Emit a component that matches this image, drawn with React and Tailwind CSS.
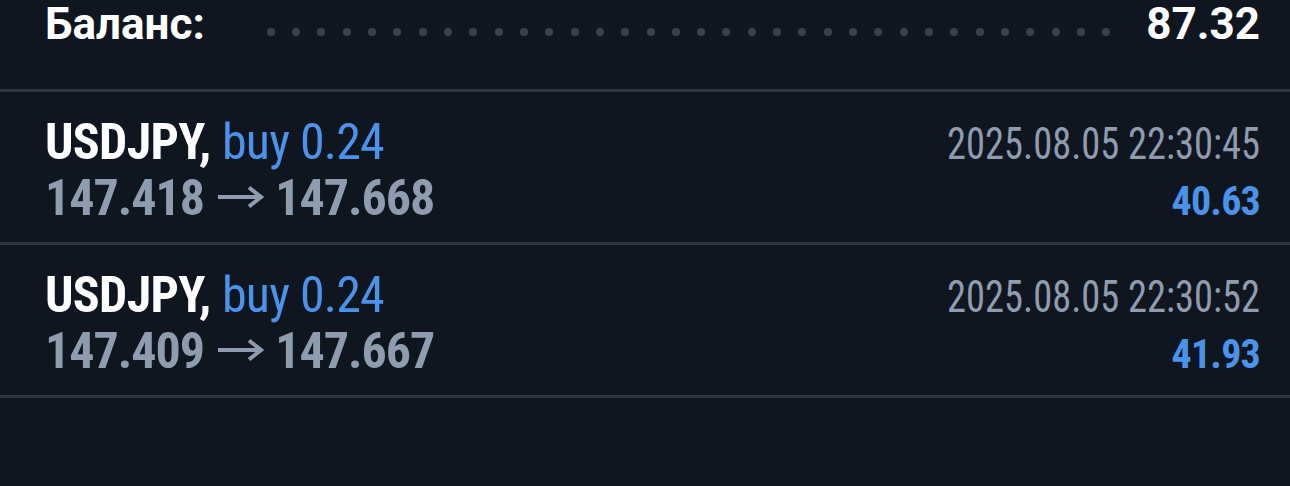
import React from "react";

const trades = [
  { symbol: "USDJPY,", side: "buy 0.24", open: "147.418", close: "147.668", time: "2025.08.05 22:30:45", profit: "40.63" },
  { symbol: "USDJPY,", side: "buy 0.24", open: "147.409", close: "147.667", time: "2025.08.05 22:30:52", profit: "41.93" },
];

const font = { fontFamily: "Roboto, 'Noto Sans', sans-serif" };

function Arrow() {
  return (
    <svg width="46" height="26" viewBox="0 0 46 26" className="inline-block align-[5px] ml-[14px] mr-[11px]" fill="none" stroke="#8f9cb0" strokeWidth="4" strokeLinecap="butt" strokeLinejoin="miter">
      <path d="M0 13H42" />
      <path d="M31 3.5L43 13L31 22.5" />
    </svg>
  );
}

export default function App() {
  const dots = Array.from({ length: 34 });
  return (
    <div className="w-[1290px] h-[486px] bg-[#10161f] overflow-hidden" style={font}>
      {/* balance */}
      <div className="h-[92px] border-b-[3px] border-[#2f3643] flex items-start pl-[45px] pr-[30px]">
        <span className="text-[44px] leading-[48px] font-bold text-white">Баланс:</span>
        <div className="flex-1 flex justify-between mt-[28px] ml-[62px] mr-[36px]">
          {dots.map((_, i) => (
            <span key={i} className="w-[8px] h-[8px] rounded-full bg-[#394150]" />
          ))}
        </div>
        <span className="text-[44px] leading-[48px] font-bold text-white">87.32</span>
      </div>

      {/* closed positions */}
      {trades.map((t, i) => (
        <div key={i} className="h-[153px] border-b-[3px] border-[#2f3643] pt-[23px] pl-[45px] pr-[30px] [font-stretch:75%]">
          <div className="flex justify-between items-baseline leading-[54px]">
            <span className="text-[50px] whitespace-nowrap">
              <span className="text-white font-bold tracking-[-0.7px]">{t.symbol}</span>{" "}
              <span className="text-[#4b93ea] font-normal tracking-[-0.8px]">{t.side}</span>
            </span>
            <span className="inline-block origin-right scale-x-[0.874] text-[44px] text-[#8f9cb0] whitespace-nowrap">{t.time}</span>
          </div>
          <div className="flex justify-between items-baseline leading-[54px]">
            <span className="text-[50px] font-bold text-[#8f9cb0] whitespace-nowrap">
              <span className="tracking-[-1px]">{t.open}</span>
              <Arrow />
              <span className="tracking-[-1px]">{t.close}</span>
            </span>
            <span className="text-[40px] font-bold text-[#4b93ea] tracking-[-0.8px]">{t.profit}</span>
          </div>
        </div>
      ))}
    </div>
  );
}
